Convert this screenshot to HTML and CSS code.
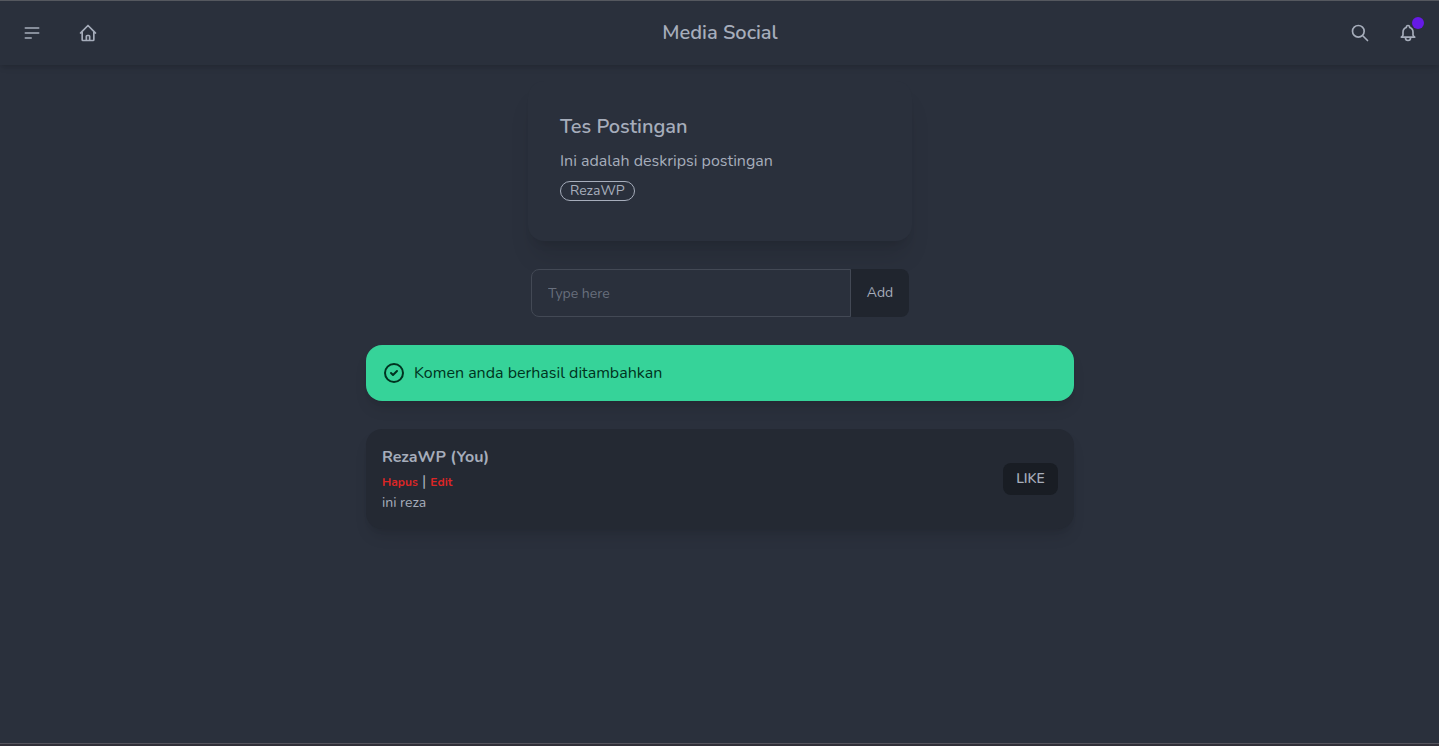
FILE: index.html
```html
<!DOCTYPE html>
<html lang="id">
<head>
<meta charset="utf-8">
<meta name="viewport" content="width=device-width, initial-scale=1">
<title>Media Social</title>
<link rel="stylesheet" href="styles.css">
</head>
<body class="page">
<header class="navbar">
  <div class="nav-start">
    <button class="icon-button" type="button" aria-label="Menu">
      <svg class="icon" viewBox="0 0 24 24"><path d="M4 6h16M4 12h16M4 18h7"/></svg>
    </button>
    <a class="icon-button" href="#" aria-label="Home">
      <svg class="icon" viewBox="0 0 24 24"><path d="M3 12l2-2m0 0l7-7 7 7M5 10v10a1 1 0 001 1h3m10-11l2 2m-2-2v10a1 1 0 01-1 1h-3m-6 0a1 1 0 001-1v-4a1 1 0 011-1h2a1 1 0 011 1v4a1 1 0 001 1m-6 0h6"/></svg>
    </a>
  </div>
  <a class="brand" href="#">Media Social</a>
  <div class="nav-end">
    <button class="icon-button" type="button" aria-label="Search">
      <svg class="icon" viewBox="0 0 24 24"><path d="M21 21l-6-6m2-5a7 7 0 11-14 0 7 7 0 0114 0z"/></svg>
    </button>
    <button class="icon-button" type="button" aria-label="Notifications">
      <span class="indicator">
        <svg class="icon" viewBox="0 0 24 24"><path d="M15 17h5l-1.405-1.405A2.032 2.032 0 0118 14.158V11a6.002 6.002 0 00-4-5.659V5a2 2 0 10-4 0v.341C7.67 6.165 6 8.388 6 11v3.159c0 .538-.214 1.055-.595 1.436L4 17h5m6 0v1a3 3 0 11-6 0v-1m6 0H9"/></svg>
        <span class="dot"></span>
      </span>
    </button>
  </div>
</header>
<main class="content">
  <article class="post">
    <h1 class="post-title">Tes Postingan</h1>
    <p class="post-text">Ini adalah deskripsi postingan</p>
    <span class="badge">RezaWP</span>
  </article>
  <form class="comment-form">
    <input class="comment-input" type="text" placeholder="Type here" aria-label="Comment">
    <button class="add-button" type="submit">Add</button>
  </form>
  <div class="alert" role="status">
    <svg class="alert-icon" viewBox="0 0 24 24"><path d="M9 12l2 2 4-4m6 2a9 9 0 11-18 0 9 9 0 0118 0z"/></svg>
    <span>Komen anda berhasil ditambahkan</span>
  </div>
  <section class="comment">
    <div>
      <h2 class="comment-author">RezaWP (You)</h2>
      <div class="comment-actions"><a class="action" href="#">Hapus</a> | <a class="action" href="#">Edit</a></div>
      <p class="comment-text">ini reza</p>
    </div>
    <button class="like-button" type="button">LIKE</button>
  </section>
</main>
<footer class="edge"></footer>
</body>
</html>
```
FILE: styles.css
```css
* {
  box-sizing: border-box;
  margin: 0;
}

.page {
  display: flex;
  flex-direction: column;
  min-height: 100vh;
  border-top: 1px solid #55585f;
  background: #2a303c;
  color: #a6adbb;
  font: 16px/24px Nunito, Lato, sans-serif;
}

button,
input {
  font: inherit;
  color: inherit;
}

a {
  color: inherit;
  text-decoration: none;
}

.navbar {
  display: grid;
  grid-template-columns: 1fr auto 1fr;
  align-items: center;
  padding: 8px 7px 8px 8px;
  box-shadow: 0 4px 6px -1px rgba(0, 0, 0, 0.1), 0 2px 4px -2px rgba(0, 0, 0, 0.1);
}

.nav-start {
  display: flex;
  gap: 8px;
}

.nav-end {
  display: flex;
  justify-content: flex-end;
}

.icon-button {
  display: flex;
  align-items: center;
  justify-content: center;
  width: 48px;
  height: 48px;
  padding: 0;
  border: 0;
  background: none;
}

.icon,
.alert-icon {
  display: block;
  width: 20px;
  height: 20px;
  fill: none;
  stroke: currentColor;
  stroke-width: 2;
  stroke-linecap: round;
  stroke-linejoin: round;
}

.brand {
  font-size: 20px;
  line-height: 28px;
  font-weight: 600;
}

.indicator {
  position: relative;
}

.dot {
  position: absolute;
  top: -6px;
  right: -6px;
  width: 12px;
  height: 12px;
  border-radius: 50%;
  background: #661ae6;
}

.content {
  display: flex;
  flex: 1;
  flex-direction: column;
  align-items: center;
  gap: 28px;
  padding: 16px 15px 16px 16px;
}

.post {
  display: flex;
  flex-direction: column;
  align-items: flex-start;
  gap: 8px;
  width: 100%;
  max-width: 384px;
  padding: 32px 32px 40px;
  border-radius: 16px;
  background: #2a303c;
  box-shadow: 0 20px 25px -5px rgba(0, 0, 0, 0.1), 0 8px 10px -6px rgba(0, 0, 0, 0.1);
}

.post-title {
  font-size: 20px;
  line-height: 28px;
  font-weight: 600;
}

.badge {
  padding: 0 9px;
  border: 1px solid currentColor;
  border-radius: 10px;
  font-size: 14px;
  line-height: 18px;
}

.comment-form {
  display: flex;
  max-width: 100%;
}

.comment-input {
  width: 320px;
  min-width: 0;
  height: 48px;
  padding: 0 16px;
  border: 1px solid #434955;
  border-radius: 8px 0 0 8px;
  background: #2a303c;
  font-size: 14px;
}

.comment-input::placeholder {
  color: #686f7d;
  opacity: 1;
}

.add-button {
  width: 58px;
  border: 0;
  border-radius: 0 8px 8px 0;
  background: #20252e;
  font-size: 14px;
}

.alert,
.comment {
  display: flex;
  align-items: center;
  width: 100%;
  max-width: 708px;
  padding: 16px;
  border-radius: 16px;
  box-shadow: 0 10px 15px -3px rgba(0, 0, 0, 0.1), 0 4px 6px -4px rgba(0, 0, 0, 0.1);
}

.alert {
  gap: 8px;
  background: #36d399;
  color: #003320;
}

.alert-icon {
  width: 24px;
  height: 24px;
}

.comment {
  justify-content: space-between;
  background: #242933;
}

.comment-author {
  font-size: 16px;
  line-height: 24px;
  font-weight: 700;
}

.action {
  color: #dc2626;
  font-size: 12px;
  line-height: 16px;
  font-weight: 700;
}

.comment-text {
  font-size: 14px;
  line-height: 20px;
}

.like-button {
  width: 55px;
  height: 32px;
  border: 0;
  border-radius: 8px;
  background: #191d24;
  font-size: 14px;
  font-weight: 600;
}

.edge {
  height: 3px;
  border-top: 1px solid #55545d;
  background: #302f38;
}
```
